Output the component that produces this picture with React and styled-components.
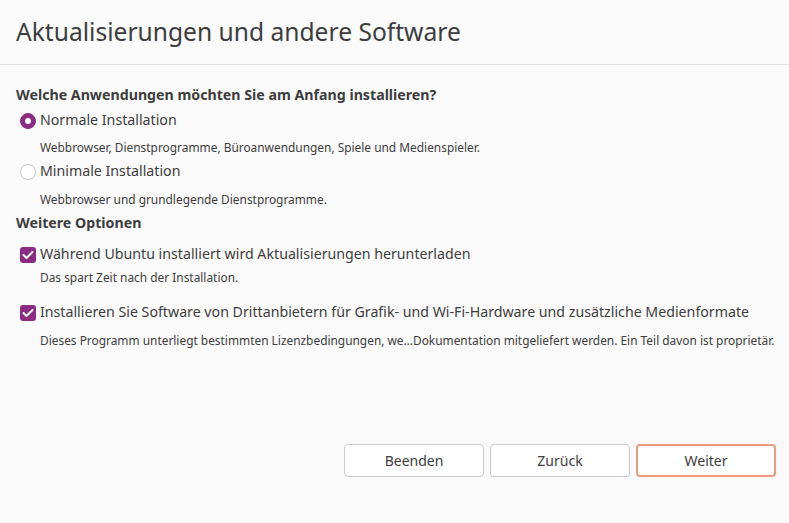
import React from 'react';
import styled, { createGlobalStyle } from 'styled-components';

const GlobalStyle = createGlobalStyle`
  html, body { margin: 0; padding: 0; background: #fafafa; }
  body { font-family: "Noto Sans", "DejaVu Sans", sans-serif; color: #3d3d3d; }
`;

const options = [
  { label: 'Normale Installation', desc: 'Webbrowser, Dienstprogramme, Büroanwendungen, Spiele und Medienspieler.', checked: true, top: 5, gap: 5 },
  { label: 'Minimale Installation', desc: 'Webbrowser und grundlegende Dienstprogramme.', checked: false, top: 4, gap: 6 },
];

const extras = [
  { label: 'Während Ubuntu installiert wird Aktualisierungen herunterladen', desc: 'Das spart Zeit nach der Installation.', top: 11, gap: 1 },
  { label: 'Installieren Sie Software von Drittanbietern für Grafik- und Wi-Fi-Hardware und zusätzliche Medienformate', desc: 'Dieses Programm unterliegt bestimmten Lizenzbedingungen, we…Dokumentation mitgeliefert werden. Ein Teil davon ist proprietär.', top: 15, gap: 6 },
];

const App = () => (
  <Window>
    <GlobalStyle />
    <Header>
      <Title>Aktualisierungen und andere Software</Title>
    </Header>
    <Content>
      <Heading>Welche Anwendungen möchten Sie am Anfang installieren?</Heading>
      {options.map(o => (
        <Option key={o.label} top={o.top}>
          <Row>
            <Radio checked={o.checked} />
            <Label>{o.label}</Label>
          </Row>
          <Desc gap={o.gap}>{o.desc}</Desc>
        </Option>
      ))}
      <Heading top={4}>Weitere Optionen</Heading>
      {extras.map(o => (
        <Option key={o.label} top={o.top}>
          <Row>
            <Check>
              <svg width="12" height="10" viewBox="0 0 12 10">
                <path d="M1.5 5 L4.5 8 L10.5 2" fill="none" stroke="#fff" strokeWidth="2" strokeLinecap="round" strokeLinejoin="round" />
              </svg>
            </Check>
            <Label>{o.label}</Label>
          </Row>
          <Desc gap={o.gap}>{o.desc}</Desc>
        </Option>
      ))}
    </Content>
    <Footer>
      <Button>Beenden</Button>
      <Button>Zurück</Button>
      <Button primary>Weiter</Button>
    </Footer>
  </Window>
);

export default App;

const Window = styled.div`
  display: flex;
  flex-direction: column;
  height: 100vh;
  background: #fafafa;
`

const Header = styled.div`
  height: 65px;
  border-bottom: 1px solid #dedede;
  display: flex;
  align-items: center;
  padding-left: 16px;
  box-sizing: border-box;
`

const Title = styled.h1`
  margin: 0 0 2px;
  font-weight: 400;
  font-size: 24.6px;
  color: #3d3d3d;
`

const Content = styled.div`
  display: flex;
  flex-direction: column;
  padding: 20px 0 0 16px;
`

const Heading = styled.div`
  margin-top: ${p => p.top || 0}px;
  font-weight: 700;
  font-size: 14.2px;
  line-height: 20px;
  color: #3d3d3d;
`

const Option = styled.div`
  display: flex;
  flex-direction: column;
  margin-top: ${p => p.top}px;
`

const Row = styled.div`
  display: flex;
  align-items: center;
  gap: 4px;
  padding-left: 4px;
  height: 22px;
`

const Label = styled.span`
  font-size: 14.2px;
  line-height: 20px;
  margin-bottom: 2px;
  color: #3d3d3d;
`

const Desc = styled.div`
  font-size: 11.9px;
  line-height: 20px;
  margin: ${p => p.gap}px 0 0 24px;
  color: #3d3d3d;
  white-space: nowrap;
`

const Radio = styled.span`
  width: 16px;
  height: 16px;
  box-sizing: border-box;
  border-radius: 50%;
  flex: none;
  background: ${p => (p.checked ? '#8b2b83' : '#fff')};
  border: 1px solid ${p => (p.checked ? '#8b2b83' : '#c8c4c0')};
  display: flex;
  align-items: center;
  justify-content: center;
  &::after {
    content: '';
    display: ${p => (p.checked ? 'block' : 'none')};
    width: 6px;
    height: 6px;
    border-radius: 50%;
    background: #fff;
  }
`

const Check = styled.span`
  width: 16px;
  height: 16px;
  border-radius: 3px;
  background: #8b2b83;
  flex: none;
  display: flex;
  align-items: center;
  justify-content: center;
`

const Footer = styled.div`
  margin-top: auto;
  display: flex;
  justify-content: flex-end;
  gap: 6px;
  padding: 0 13px 46px 0;
`

const Button = styled.button`
  width: 140px;
  height: 33px;
  box-sizing: border-box;
  background: #fff;
  border: ${p => (p.primary ? '2px solid #ec9a80' : '1px solid #cdc9c5')};
  border-radius: 4px;
  font-family: inherit;
  font-size: 14px;
  color: #3d3d3d;
`
